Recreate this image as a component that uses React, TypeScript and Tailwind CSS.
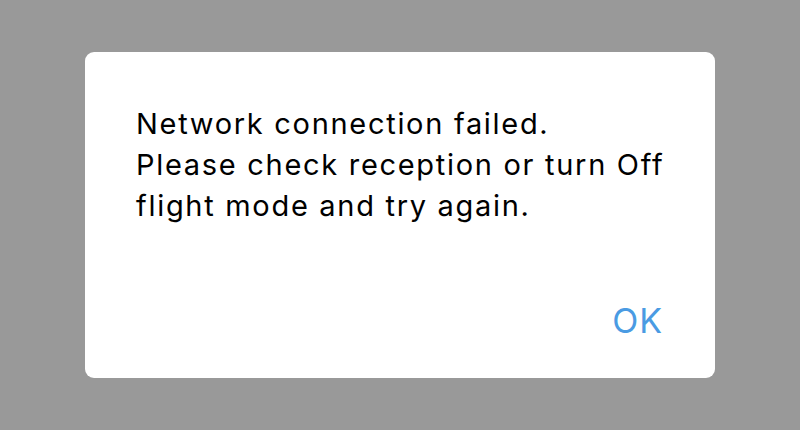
export default function App() {
  return (
    <div className="w-[800px] h-[430px] bg-[#999999] flex items-center justify-center font-['Inter',sans-serif]">
      <div className="w-[630px] h-[326px] bg-white rounded-[9px] flex flex-col pl-[51px] pr-[52px] pt-[51px] pb-[37px] -mt-[1px]">
        <p className="text-[29px] leading-[41px] tracking-[1.7px] text-black whitespace-nowrap">
          Network connection failed.
          <br />
          Please check reception or turn Off
          <br />
          flight mode and try again.
        </p>
        <div className="mt-auto flex justify-end">
          <button className="text-[34px] leading-[40px] tracking-[1px] text-[#4a9be3]">OK</button>
        </div>
      </div>
    </div>
  );
}
